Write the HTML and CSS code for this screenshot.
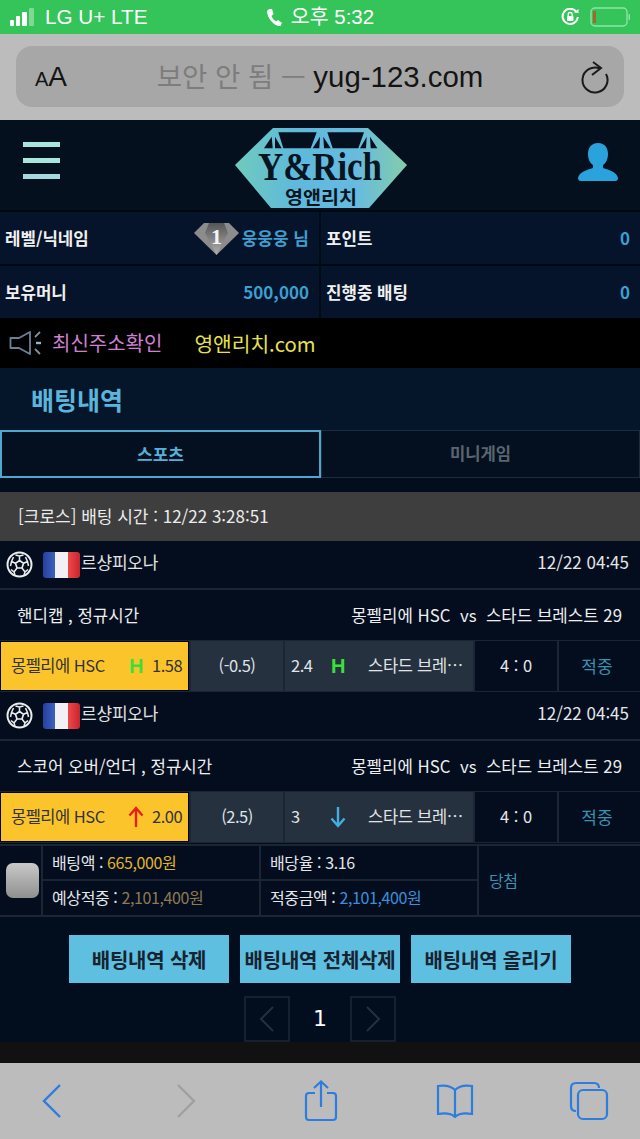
FILE: index.html
```html
<!DOCTYPE html>
<html lang="ko">
<head>
<meta charset="utf-8">
<title>영앤리치</title>
<link rel="stylesheet" href="styles.css">
</head>
<body>
<div class="status">
  <div class="st-left">
    <svg class="signal" width="28" height="20" viewBox="0 0 28 20"><rect x="0" y="13" width="4" height="6" rx="1" fill="#fff"/><rect x="6" y="9" width="4" height="10" rx="1" fill="#fff"/><rect x="12" y="5" width="5" height="14" rx="1" fill="#fff"/><rect x="19" y="1" width="5" height="18" rx="1" fill="#7fd993"/></svg>
    <span>LG U+ LTE</span>
  </div>
  <div class="st-center">
    <svg width="17" height="19" viewBox="0 0 17 19"><path d="M3 1 L6 1 L7.500 6 L5.500 8 C6.500 10.500 8 12 10 13.500 L12 12 L16 15 L14.500 18 C8 18.500 1 10 1 3 Z" fill="#fff"/></svg>
    <span>오후 5:32</span>
  </div>
  <div class="st-right">
    <svg width="20" height="18" viewBox="0 0 20 18"><path d="M15.500 4 A7.600 7.600 0 1 0 16.800 9" fill="none" stroke="#fff" stroke-width="2"/><path d="M13 4.500 L17.500 5 L17.500 1" fill="#fff"/><rect x="6" y="8" width="6.500" height="5" rx="1" fill="#fff"/><path d="M7.200 8 V6.500 a2 2 0 0 1 4 0 V8" fill="none" stroke="#fff" stroke-width="1.300"/></svg>
    <svg width="40" height="20" viewBox="0 0 40 20"><rect x="1" y="1" width="36" height="18" rx="4" fill="none" stroke="#8fe3a6" stroke-width="1.400"/><rect x="3" y="4" width="3" height="12" fill="#a8662e"/><rect x="38.500" y="7" width="1.500" height="6" rx=".7" fill="#8fe3a6"/></svg>
  </div>
</div>

<div class="addr-wrap">
  <div class="addr">
    <span class="aa"><small>A</small>A</span>
    <span class="url"><span class="insecure">보안 안 됨 — </span>yug-123.com</span>
    <svg class="reload" width="28" height="33" viewBox="0 0 28 33"><path d="M25 13 A12.500 12.500 0 1 1 19 7.500" fill="none" stroke="#1a1a1a" stroke-width="2"/><path d="M12 1 L20 7 L11 14" fill="none" stroke="#1a1a1a" stroke-width="2"/></svg>
  </div>
</div>

<header class="top">
  <div class="burger"><i></i><i></i><i></i></div>
  <svg class="logo" width="172" height="80" viewBox="0 0 172 80">
    <defs><linearGradient id="lg" x1="0" y1="0" x2="1" y2="0"><stop offset="0" stop-color="#6fcbbc"/><stop offset=".35" stop-color="#5eb9dc"/><stop offset=".7" stop-color="#66bbdf"/><stop offset="1" stop-color="#84ccaa"/></linearGradient></defs>
    <polygon points="38,0 133,0 172,37 134,80 36,80 0,37" fill="url(#lg)"/>
    <g fill="#05101f">
      <polygon points="43.300,4.300 81.700,4.300 75.700,20.300 48.300,20.300"/>
      <polygon points="92.300,4.300 129,4.300 123.300,20.300 97.700,20.300"/>
      <polygon points="36.700,8.700 29,20.300 37.700,20.300"/>
      <polygon points="40,8.700 46.700,20.300 40,20.300"/>
      <polygon points="85,8.700 77.700,20.300 84.300,20.300"/>
      <polygon points="88.300,8.700 95.700,20.300 89,20.300"/>
      <polygon points="131.700,8.700 125,20.300 131,20.300"/>
      <polygon points="135,8.700 142.300,20.300 135.700,20.300"/>
    </g>
    <text class="logo-en" x="23" y="52" textLength="124" lengthAdjust="spacingAndGlyphs">Y&amp;Rich</text>
    <text class="logo-ko" x="50" y="76" textLength="72" lengthAdjust="spacingAndGlyphs">영앤리치</text>
  </svg>
  <svg class="user" width="42" height="40" viewBox="0 0 42 40"><path d="M21 1 C14 1 11 6 11 12 C11 17 13 21 16 23 L16 26 C10 28 2 30 1 36 C1 38 2 39 4 39 L38 39 C40 39 41 38 41 36 C40 30 32 28 26 26 L26 23 C29 21 31 17 31 12 C31 6 28 1 21 1 Z" fill="#2aa2dc"/></svg>
</header>

<section class="info">
  <div class="info-row">
    <div class="cell">
      <b>레벨/닉네임</b>
      <div class="who">
        <svg class="dia" width="45" height="33" viewBox="0 0 45 33"><defs><linearGradient id="dm" x1="0" y1="0" x2="0" y2="1"><stop offset="0" stop-color="#555"/><stop offset="1" stop-color="#b0b0b0"/></linearGradient></defs><polygon points="10,1 35,1 45,11 22.500,33 0,11" fill="#8c8c8c"/><polygon points="15,1 30,1 34,11 22.500,33 11,11" fill="url(#dm)"/><text class="dm-num" x="22.500" y="22">1</text></svg>
        <span class="val">웅웅웅 님</span>
      </div>
    </div>
    <div class="cell"><b>포인트</b><span class="val">0</span></div>
  </div>
  <div class="info-row">
    <div class="cell"><b>보유머니</b><span class="val">500,000</span></div>
    <div class="cell"><b>진행중 배팅</b><span class="val">0</span></div>
  </div>
</section>

<div class="notice">
  <svg width="34" height="26" viewBox="0 0 34 26"><path d="M1.500 8 H10 L21 2 V24 L10 18 H1.500 Z" fill="none" stroke="#6a8296" stroke-width="1.800" stroke-linejoin="round"/><path d="M26 7 L31 2 M26 19 L31 24" stroke="#7f8f9c" stroke-width="1.800"/><path d="M27 13 H32" stroke="#8fb4cc" stroke-width="2.400"/></svg>
  <span class="pink">최신주소확인</span>
  <span class="yellow">영앤리치.com</span>
</div>

<h1 class="title">배팅내역</h1>

<div class="tabs">
  <div class="tab on">스포츠</div>
  <div class="tab">미니게임</div>
</div>

<div class="bethead">[크로스] 배팅 시간 : 12/22 3:28:51</div>

<div class="league">
  <svg class="ball" width="27" height="27" viewBox="0 0 27 27"><g fill="none" stroke="#ececec"><circle cx="13.500" cy="13.500" r="12" stroke-width="2"/><polygon points="13.500,9.500 17.500,12.300 16,17 11,17 9.500,12.300" stroke-width="1.700"/><path d="M13.500 9.500 V5 M9.500 12.300 L5.500 10.500 M17.500 12.300 L21.500 10.500 M11 17 L8 21 M16 17 L19 21 M9.500 4 L13.500 5 L17.500 4 M4.500 15 L5.500 10.500 L7.500 6 M22.500 15 L21.500 10.500 L19.500 6 M5 18.500 L8 21 L9 24 M22 18.500 L19 21 L18 24" stroke-width="1.500"/></g></svg>
  <div class="flag"><i class="fb"></i><i class="fw"></i><i class="fr"></i></div>
  <span class="lname">르샹피오나</span>
  <span class="date">12/22 04:45</span>
</div>
<div class="market"><span>핸디캡 , 정규시간</span><span class="teams">몽펠리에 HSC&nbsp; vs&nbsp; 스타드 브레스트 29</span></div>
<div class="bets">
  <div class="home"><span class="tn">몽펠리에 HSC</span><b class="h">H</b><span class="odd">1.58</span></div>
  <div class="mid">(-0.5)</div>
  <div class="away"><span class="a-odd">2.4</span><b class="h">H</b><span class="a-name">스타드 브레⋯</span></div>
  <div class="score">4 : 0</div>
  <div class="res">적중</div>
</div>

<div class="league">
  <svg class="ball" width="27" height="27" viewBox="0 0 27 27"><g fill="none" stroke="#ececec"><circle cx="13.500" cy="13.500" r="12" stroke-width="2"/><polygon points="13.500,9.500 17.500,12.300 16,17 11,17 9.500,12.300" stroke-width="1.700"/><path d="M13.500 9.500 V5 M9.500 12.300 L5.500 10.500 M17.500 12.300 L21.500 10.500 M11 17 L8 21 M16 17 L19 21 M9.500 4 L13.500 5 L17.500 4 M4.500 15 L5.500 10.500 L7.500 6 M22.500 15 L21.500 10.500 L19.500 6 M5 18.500 L8 21 L9 24 M22 18.500 L19 21 L18 24" stroke-width="1.500"/></g></svg>
  <div class="flag"><i class="fb"></i><i class="fw"></i><i class="fr"></i></div>
  <span class="lname">르샹피오나</span>
  <span class="date">12/22 04:45</span>
</div>
<div class="market"><span>스코어 오버/언더 , 정규시간</span><span class="teams">몽펠리에 HSC&nbsp; vs&nbsp; 스타드 브레스트 29</span></div>
<div class="bets">
  <div class="home"><span class="tn">몽펠리에 HSC</span><svg class="arrow" width="16" height="22" viewBox="0 0 16 22"><path d="M8 21 V3 M1.500 9.500 L8 2 L14.500 9.500" fill="none" stroke="#e8201a" stroke-width="2.400"/></svg><span class="odd">2.00</span></div>
  <div class="mid">(2.5)</div>
  <div class="away"><span class="a-odd">3</span><svg class="arrow down" width="16" height="22" viewBox="0 0 16 22"><path d="M8 1 V19 M1.500 12.500 L8 20 L14.500 12.500" fill="none" stroke="#3fb0e0" stroke-width="2.400"/></svg><span class="a-name">스타드 브레⋯</span></div>
  <div class="score">4 : 0</div>
  <div class="res">적중</div>
</div>

<div class="summary">
  <div class="chk"><i></i></div>
  <div class="sgrid">
    <div>배팅액 : <span class="gold">665,000원</span></div>
    <div>배당율 : 3.16</div>
    <div>예상적중 : <span class="tan">2,101,400원</span></div>
    <div>적중금액 : <span class="blue">2,101,400원</span></div>
  </div>
  <div class="won">당첨</div>
</div>

<div class="actions">
  <button class="btn">배팅내역 삭제</button>
  <button class="btn">배팅내역 전체삭제</button>
  <button class="btn">배팅내역 올리기</button>
</div>

<div class="pager">
  <div class="pg"><svg width="16" height="26" viewBox="0 0 16 26"><path d="M14 1 L2 13 L14 25" fill="none" stroke="#243040" stroke-width="2"/></svg></div>
  <span class="pnum">1</span>
  <div class="pg"><svg width="16" height="26" viewBox="0 0 16 26"><path d="M2 1 L14 13 L2 25" fill="none" stroke="#243040" stroke-width="2"/></svg></div>
</div>

<div class="strip"></div>

<nav class="toolbar">
  <div class="slot"><svg width="20" height="34" viewBox="0 0 20 34"><path d="M18 1 L2 17 L18 33" fill="none" stroke="#2b7de0" stroke-width="2.400"/></svg></div>
  <div class="slot"><svg width="20" height="34" viewBox="0 0 20 34"><path d="M2 1 L18 17 L2 33" fill="none" stroke="#a0a0a0" stroke-width="2.400"/></svg></div>
  <div class="slot"><svg width="34" height="42" viewBox="0 0 34 42"><path d="M11 13 H5 Q2 13 2 16 V37 Q2 40 5 40 H29 Q32 40 32 37 V16 Q32 13 29 13 H23 M17 27 V2 M10 8 L17 1.500 L24 8" fill="none" stroke="#2b7de0" stroke-width="2.200"/></svg></div>
  <div class="slot"><svg width="38" height="34" viewBox="0 0 38 34"><path d="M19 6 C15 2 8 1 2 2 V30 C8 29 15 29 19 33 C23 29 30 29 36 30 V2 C30 1 23 2 19 6 V33" fill="none" stroke="#2b7de0" stroke-width="2.200"/></svg></div>
  <div class="slot"><svg width="40" height="40" viewBox="0 0 40 40"><path d="M7 30 Q2 30 2 25 V7 Q2 2 7 2 H25 Q30 2 30 7" fill="none" stroke="#2b7de0" stroke-width="2.200"/><rect x="9" y="9" width="29" height="29" rx="5" fill="none" stroke="#2b7de0" stroke-width="2.200"/></svg></div>
</nav>
</body>
</html>
```

FILE: styles.css
```css
* { box-sizing: border-box; }
html, body { margin: 0; padding: 0; }
body {
  width: 640px;
  height: 1139px;
  overflow: hidden;
  background: #020d1d;
  color: #e4e6e8;
  font-family: "Noto Sans CJK KR", "Noto Sans", sans-serif;
  font-size: 16px;
  line-height: 1.2;
}
.status {
  height: 34px;
  background: #34c45a;
  color: #fff;
  display: grid;
  grid-template-columns: 1fr auto 1fr;
  align-items: center;
  padding: 0 10px 0 10px;
  font-family: "Liberation Sans", "Noto Sans CJK KR", sans-serif;
  font-size: 20.700px;
}
.st-left, .st-center, .st-right { display: flex; align-items: center; }
.st-left { gap: 7px; }
.st-center { gap: 8px; font-size: 20.500px; }
.st-right { justify-content: flex-end; gap: 9px; }
.addr-wrap {
  height: 86px;
  background: #bcbcbc;
  padding: 12px 16px 13px;
}
.addr {
  height: 61px;
  background: #a7a7a7;
  border-radius: 16px;
  position: relative;
  display: flex;
  align-items: center;
  justify-content: center;
  color: #141414;
  font-family: "Liberation Sans", "Noto Sans CJK KR", sans-serif;
  font-size: 29.400px;
}
.aa { position: absolute; left: 19px; top: 14px; font-size: 28px; }
.aa small { font-size: 20px; }
.insecure { color: #7d7d7d; font-family: "Noto Sans CJK KR", sans-serif; font-size: 27.500px; }
.reload { position: absolute; right: 15px; top: 15px; }
.top {
  height: 90px;
  background: #05101f;
  display: flex;
  align-items: flex-end;
  justify-content: space-between;
  padding: 0 21px 2px 23px;
}
.burger { display: flex; flex-direction: column; gap: 11px; margin-bottom: 29px; }
.burger i { display: block; width: 37px; height: 5px; background: #a6e6dd; }
.burger i:last-child { background: #a5d8de; }
.logo { display: block; margin-left: 4px; }
.logo-en { font-family: "Liberation Serif", serif; font-weight: 700; font-size: 40px; fill: #08141f; }
.logo-ko { font-family: "Noto Sans CJK KR", sans-serif; font-weight: 700; font-size: 18px; fill: #08141f; }
.user { margin-bottom: 26px; }
.info { background: #010710; padding-top: 2px; }
.info-row { display: flex; height: 52px; margin-bottom: 2px; }
.info-row:last-child { margin-bottom: 0; }
.cell {
  flex: 1;
  background: #05142a;
  display: flex;
  align-items: center;
  justify-content: space-between;
  padding: 0 10px 0 5px;
}
.cell:last-child { border-left: 2px solid #020a14; padding-left: 5px; }
.cell b { font-size: 16.800px; color: #f0f0f0; }
.val { color: #3d9fd0; font-size: 17px; font-weight: 700; }
.who { display: flex; align-items: center; gap: 3px; }
.dm-num { font-family: "Liberation Serif", serif; font-weight: 700; font-size: 22px; fill: #f4f4f4; text-anchor: middle; }
.notice {
  height: 50px;
  background: #000;
  display: flex;
  align-items: center;
  padding-left: 9px;
  font-size: 20px;
}
.pink { color: #cf80cf; margin-left: 9px; }
.yellow { color: #e6e24e; margin-left: 32px; font-size: 20.300px; }
.title {
  margin: 0;
  height: 62px;
  background: #06162a;
  color: #5bb5dc;
  font-size: 25px;
  font-weight: 700;
  padding-left: 31px;
  display: flex;
  align-items: center;
}
.tabs { display: flex; height: 48px; background: #06162a; }
.tab {
  flex: 1;
  display: flex;
  align-items: center;
  justify-content: center;
  color: #5b6570;
  font-size: 16.600px;
  font-weight: 700;
  background: #04101f;
  border: 1px solid #1c2b3d;
}
.tab.on { color: #56b0d8; border: 2px solid #4ea8cc; font-size: 17px; }
.bethead {
  margin-top: 14px;
  height: 49px;
  background: #3e3e3e;
  color: #ececec;
  display: flex;
  align-items: center;
  padding-left: 18px;
  font-size: 17px;
}
.league {
  height: 49px;
  background: #030d1e;
  border-bottom: 2px solid #1b2533;
  display: flex;
  align-items: center;
  padding: 0 11px 0 6px;
}
.flag {
  display: flex;
  width: 37px;
  height: 26px;
  margin-left: 10px;
  border-radius: 3px;
  overflow: hidden;
}
.flag i { flex: 1; display: block; }
.fb { background: linear-gradient(90deg, #26409a, #3f62c0); }
.fw { background: #f2f2f6; }
.fr { background: linear-gradient(90deg, #ee4a4c, #c8252c); }
.lname { font-size: 17px; margin-left: 1px; padding-bottom: 4px; color: #e2e2e2; letter-spacing: -0.200px; }
.date { margin-left: auto; padding-bottom: 4px; font-size: 17px; }
.market {
  height: 50px;
  background: #030d1e;
  display: flex;
  align-items: center;
  justify-content: space-between;
  padding: 0 18px 0 17px;
  font-size: 16.800px;
  color: #eee;
}
.bets { display: flex; height: 52px; gap: 2px; background: #1b2533; padding: 1px 0; font-size: 16.500px; }
.home, .mid, .away, .score, .res { display: flex; align-items: center; }
.home {
  width: 189px;
  background: #fcc42b;
  color: #333;
  padding: 0 5px 0 10px;
  border: 1px solid #02060e;
  letter-spacing: -0.500px;
}
.tn { flex: 1; white-space: nowrap; }
.h { color: #3adf3c; font-size: 20px; font-family: "Liberation Sans", sans-serif; }
.odd { margin-left: 9px; width: 31px; }
.home .arrow { margin-right: -1px; }
.mid { width: 92px; background: #25313f; justify-content: center; color: #dfe3e6; letter-spacing: -0.500px; }
.away { width: 188px; background: #25313f; padding: 0 10px 0 6px; color: #e2e4e6; }
.a-odd { width: 32px; letter-spacing: -0.500px; }
.away .h { margin-left: 8px; }
.away .arrow { margin-left: 7px; margin-right: 16px; }
.a-name { margin-left: auto; white-space: nowrap; letter-spacing: -0.300px; }
.score { width: 82px; background: #030d1e; justify-content: center; }
.res { flex: 1; background: #030d1e; justify-content: center; color: #3b92b0; font-size: 17px; padding-right: 5px; }
.summary {
  display: flex;
  height: 73px;
  margin-top: 1px;
  border-top: 2px solid #1b2533;
  border-bottom: 2px solid #1b2533;
  background: #030d1e;
  font-size: 16px;
  letter-spacing: -0.400px;
}
.chk { width: 43px; display: flex; align-items: center; padding-left: 6px; border-right: 2px solid #1b2533; }
.chk i {
  display: block;
  width: 33px;
  height: 35px;
  border-radius: 7px;
  background: linear-gradient(#c9c9c9, #8f8f8f);
}
.sgrid { width: 436px; display: grid; grid-template-columns: 1fr 1fr; grid-template-rows: 1fr 1fr; }
.sgrid div {
  display: flex;
  align-items: center;
  gap: 4px;
  padding-left: 9px;
  border-right: 2px solid #1b2533;
}
.sgrid div:nth-child(-n+2) { border-bottom: 2px solid #1b2533; }
.gold { color: #e2b42a; }
.tan { color: #8d7a55; }
.blue { color: #3c8fd8; }
.won { flex: 1; display: flex; align-items: center; padding-left: 10px; color: #3b92b0; font-size: 16px; }
.actions { display: flex; justify-content: center; gap: 11px; margin-top: 18px; }
.btn {
  width: 160px;
  height: 48px;
  padding: 0;
  border: 0;
  background: #5ebfe0;
  color: #172331;
  font-family: "Noto Sans CJK KR", sans-serif;
  font-weight: 700;
  font-size: 20px;
  letter-spacing: -0.200px;
  white-space: nowrap;
}
.pager { display: flex; justify-content: center; align-items: center; gap: 14px; margin-top: 13px; height: 46px; }
.pg {
  width: 46px;
  height: 46px;
  border: 2px solid #17202e;
  display: flex;
  align-items: center;
  justify-content: center;
}
.pnum { width: 32px; text-align: center; color: #fff; font-family: "DejaVu Sans", sans-serif; font-size: 22px; }
.strip { height: 21px; background: #111; }
.toolbar {
  height: 76px;
  background: #bcbcbc;
  display: flex;
  align-items: center;
  justify-content: space-between;
  padding: 0 31px 0 32px;
}
.slot { width: 40px; display: flex; justify-content: center; }
```
